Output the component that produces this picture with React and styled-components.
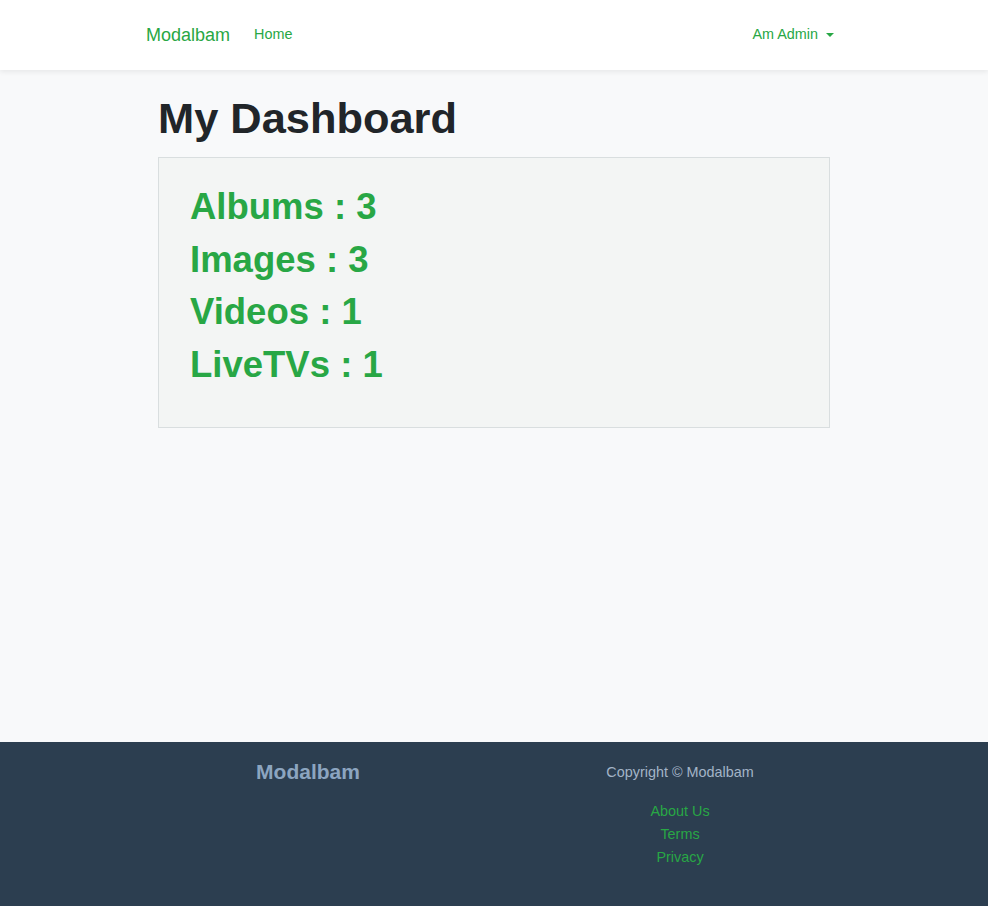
import React from "react";
import styled, { createGlobalStyle } from "styled-components";

const GlobalStyle = createGlobalStyle`
  * { box-sizing: border-box; }
  html, body { margin: 0; padding: 0; }
  body {
    font-family: "Liberation Sans", Arial, Helvetica, sans-serif;
    font-size: 14.4px;
    line-height: 1.6;
    color: #212529;
    background: #f8f9fa;
  }
`;

const Page = styled.div`
  min-height: 100vh;
  display: flex;
  flex-direction: column;
`;

const NavBar = styled.nav`
  background: #ffffff;
  height: 70px;
  box-shadow: 0 2px 5px rgba(0, 0, 0, 0.07);
  position: relative;
  z-index: 1;
`;

const NavInner = styled.div`
  width: 720px;
  height: 100%;
  margin: 0 auto;
  padding: 0 12px;
  display: flex;
  align-items: center;
`;

const Brand = styled.a`
  font-size: 18px;
  color: #28a745;
  text-decoration: none;
  margin-right: 16px;
  line-height: 1.5;
`;

const NavLink = styled.a`
  font-size: 14.4px;
  color: #28a745;
  text-decoration: none;
  padding: 0 8px;
  display: flex;
  align-items: center;
  margin-left: ${(p) => (p.$push ? "auto" : "0")};
`;

const Caret = styled.span`
  display: inline-block;
  margin-left: 8px;
  width: 0;
  height: 0;
  border-top: 4.5px solid #28a745;
  border-left: 4.5px solid transparent;
  border-right: 4.5px solid transparent;
`;

const Main = styled.main`
  flex: 1;
  width: 720px;
  margin: 0 auto;
  padding: 22px 24px 0;
`;

const Title = styled.h1`
  font-size: 43.4px;
  font-weight: 700;
  line-height: 1.2;
  margin: 0 0 13px;
  color: #212529;
`;

const Card = styled.section`
  background: #f3f5f4;
  border: 1px solid #d9dedf;
  padding: 27px 31px 32px;
`;

const Stat = styled.h2`
  font-size: 36.5px;
  font-weight: 700;
  line-height: 1.2;
  margin: 0 0 8.8px;
  color: #28a745;
`;

const Footer = styled.footer`
  background: #2c3e50;
  padding: 19px 0 37px;
`;

const FooterInner = styled.div`
  width: 744px;
  margin: 0 auto;
  display: grid;
  grid-template-columns: 1fr 1fr;
`;

const FooterCol = styled.div`
  display: flex;
  flex-direction: column;
  align-items: center;
`;

const FooterBrand = styled.div`
  font-size: 21px;
  font-weight: 700;
  line-height: 1.05;
  color: #8ca5c0;
`;

const Copyright = styled.p`
  margin: 0 0 16px;
  color: #a3b4c7;
  font-size: 14.4px;
`;

const FooterLink = styled.a`
  color: #28a745;
  text-decoration: none;
  font-size: 14.4px;
`;

export default function App() {
  const stats = [
    ["Albums", 3],
    ["Images", 3],
    ["Videos", 1],
    ["LiveTVs", 1],
  ];
  return (
    <>
      <GlobalStyle />
      <Page>
        <NavBar>
          <NavInner>
            <Brand href="#">Modalbam</Brand>
            <NavLink href="#">Home</NavLink>
            <NavLink href="#" $push>
              Am Admin
              <Caret />
            </NavLink>
          </NavInner>
        </NavBar>
        <Main>
          <Title>My Dashboard</Title>
          <Card>
            {stats.map(([label, n]) => (
              <Stat key={label}>
                {label} : {n}
              </Stat>
            ))}
          </Card>
        </Main>
        <Footer>
          <FooterInner>
            <FooterCol>
              <FooterBrand>Modalbam</FooterBrand>
            </FooterCol>
            <FooterCol>
              <Copyright>Copyright © Modalbam</Copyright>
              <FooterLink href="#">About Us</FooterLink>
              <FooterLink href="#">Terms</FooterLink>
              <FooterLink href="#">Privacy</FooterLink>
            </FooterCol>
          </FooterInner>
        </Footer>
      </Page>
    </>
  );
}
